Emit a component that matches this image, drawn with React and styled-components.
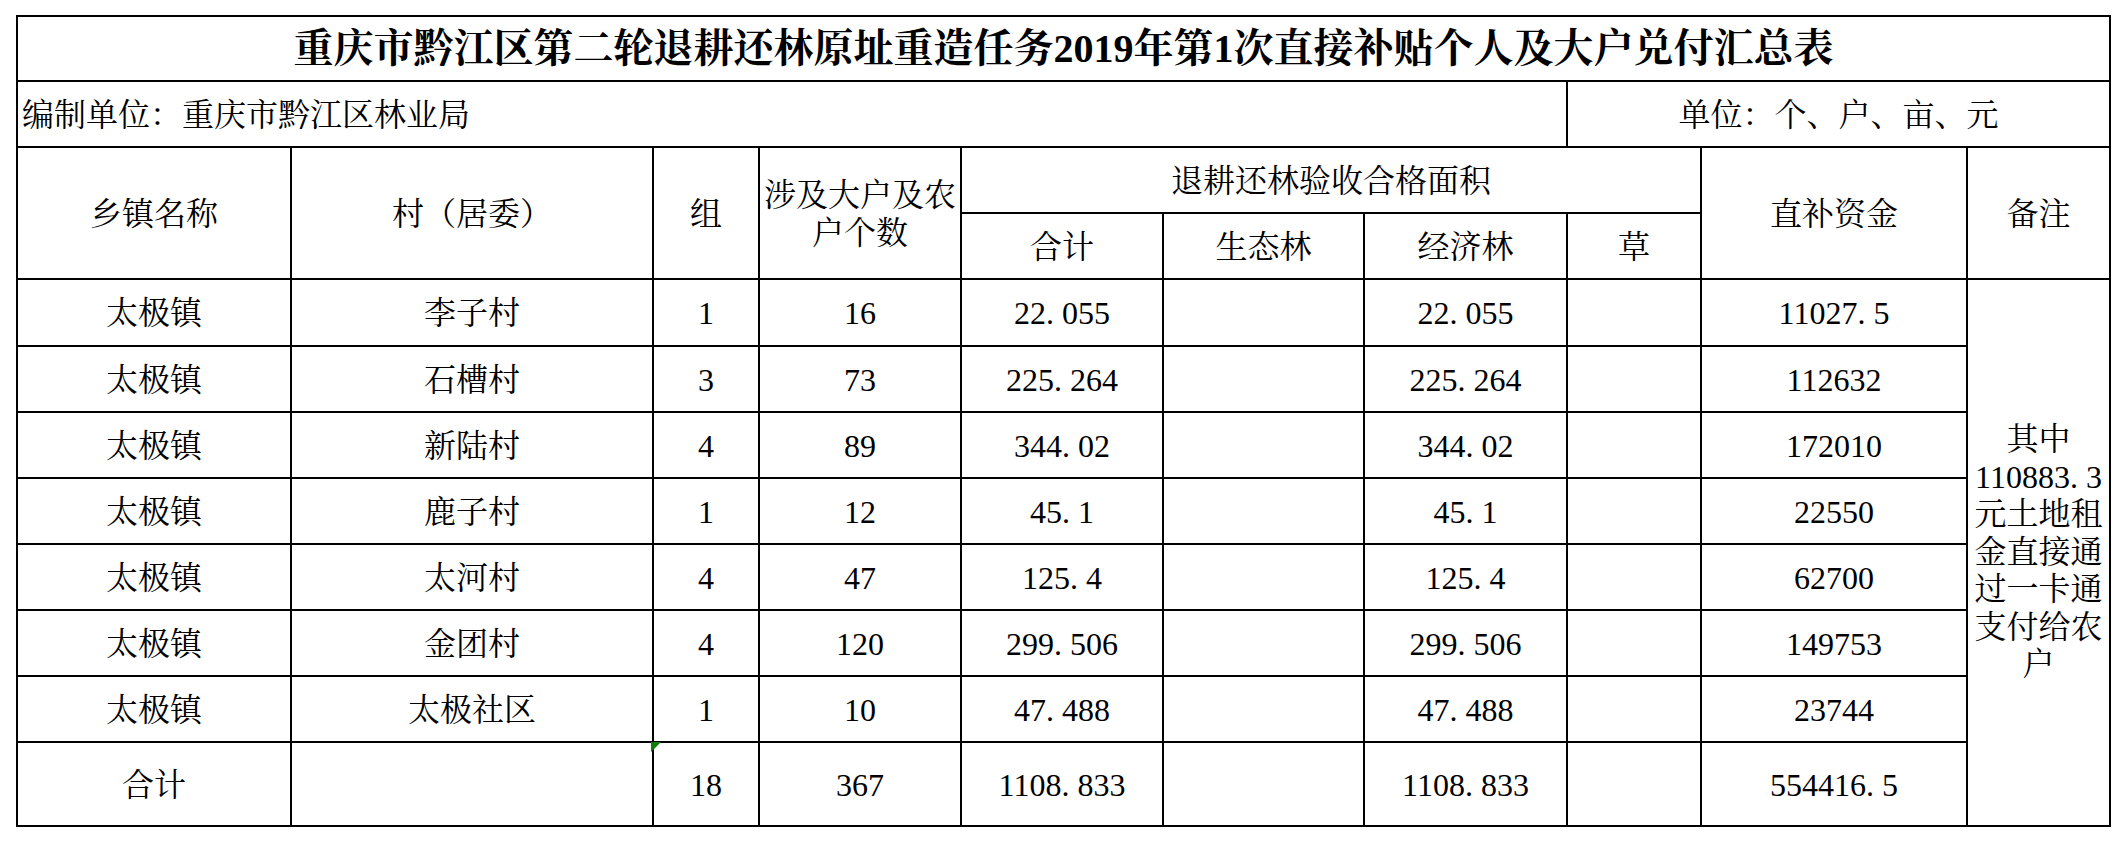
import React from "react";
import styled, { createGlobalStyle } from "styled-components";

const Global = createGlobalStyle`
  html, body { margin: 0; padding: 0; background: #ffffff; }
  body {
    font-family: "Liberation Serif", "Noto Serif CJK SC", "Noto Sans CJK SC", serif;
    color: #000;
  }
`;

const Page = styled.div`
  padding: 15px 0 0 16px;
  width: 2126px;
  height: 842px;
  box-sizing: border-box;
  overflow: hidden;
`;

const Sheet = styled.div`
  display: grid;
  width: 2095px;
  box-sizing: border-box;
  grid-template-columns: 274px 362px 106px 202px 202px 201px 203px 134px 266px 143px;
  grid-template-rows: 65px 66px 66px 66px 67px 66px 66px 66px 66px 66px 66px 84px;
  border-top: 2px solid #000;
  border-left: 2px solid #000;
`;

const Cell = styled.div`
  position: relative;
  box-sizing: border-box;
  border-right: 2px solid #000;
  border-bottom: 2px solid #000;
  display: flex;
  align-items: center;
  justify-content: ${(p) => (p.$left ? "flex-start" : "center")};
  text-align: center;
  padding: 3px ${(p) => (p.$left ? "0 0 4px" : "4px 0 4px")};
  font-size: 32px;
  line-height: 37.5px;
  font-weight: 400;
  grid-column: ${(p) => (p.$cols ? `span ${p.$cols}` : "auto")};
  grid-row: ${(p) => (p.$rows ? `span ${p.$rows}` : "auto")};
`;

const Title = styled(Cell)`
  font-size: 40px;
  font-weight: 700;
  line-height: 48px;
  padding: 0;
  white-space: nowrap;
`;

const Remark = styled(Cell)`
  padding: 0 4px;
  line-height: 37.5px;
`;

const RemarkText = styled.div`
  width: 130px;
  text-align: center;
`;

const Line = styled.span`
  display: block;
  white-space: nowrap;
`;

const Dot = styled.span`
  display: inline-block;
  width: 0.5em;
  text-align: left;
`;

const Flag = styled.span`
  position: absolute;
  top: -1px;
  left: -3px;
  width: 0;
  height: 0;
  border-top: 10px solid #0b7d0b;
  border-right: 10px solid transparent;
`;

const num = (v) => {
  if (!v.includes(".")) return v;
  const [a, b] = v.split(".");
  return (
    <>
      {a}
      <Dot>.</Dot>
      {b}
    </>
  );
};

const rows = [
  ["太极镇", "李子村", "1", "16", "22.055", "", "22.055", "", "11027.5"],
  ["太极镇", "石槽村", "3", "73", "225.264", "", "225.264", "", "112632"],
  ["太极镇", "新陆村", "4", "89", "344.02", "", "344.02", "", "172010"],
  ["太极镇", "鹿子村", "1", "12", "45.1", "", "45.1", "", "22550"],
  ["太极镇", "太河村", "4", "47", "125.4", "", "125.4", "", "62700"],
  ["太极镇", "金团村", "4", "120", "299.506", "", "299.506", "", "149753"],
  ["太极镇", "太极社区", "1", "10", "47.488", "", "47.488", "", "23744"],
];

const total = ["合计", "", "18", "367", "1108.833", "", "1108.833", "", "554416.5"];

const remarkLines = ["其中", "110883.3", "元土地租", "金直接通", "过一卡通", "支付给农", "户"];

export default function App() {
  return (
    <Page>
      <Global />
      <Sheet>
        <Title $cols={10}>
          重庆市黔江区第二轮退耕还林原址重造任务2019年第1次直接补贴个人及大户兑付汇总表
        </Title>

        <Cell $cols={7} $left>编制单位：重庆市黔江区林业局</Cell>
        <Cell $cols={3}>单位：个、户、亩、元</Cell>

        <Cell $rows={2}>乡镇名称</Cell>
        <Cell $rows={2}>村（居委）</Cell>
        <Cell $rows={2}>组</Cell>
        <Cell $rows={2}>涉及大户及农户个数</Cell>
        <Cell $cols={4}>退耕还林验收合格面积</Cell>
        <Cell $rows={2}>直补资金</Cell>
        <Cell $rows={2}>备注</Cell>
        <Cell>合计</Cell>
        <Cell>生态林</Cell>
        <Cell>经济林</Cell>
        <Cell>草</Cell>

        {rows.map((r, i) => (
          <React.Fragment key={i}>
            {r.map((v, j) => (
              <Cell key={j}>{num(v)}</Cell>
            ))}
            {i === 0 && (
              <Remark $rows={8}>
                <RemarkText>
                  {remarkLines.map((l, k) => (
                    <Line key={k}>{num(l)}</Line>
                  ))}
                </RemarkText>
              </Remark>
            )}
          </React.Fragment>
        ))}

        {total.map((v, j) => (
          <Cell key={`t${j}`}>
            {j === 2 && <Flag />}
            {num(v)}
          </Cell>
        ))}
      </Sheet>
    </Page>
  );
}
